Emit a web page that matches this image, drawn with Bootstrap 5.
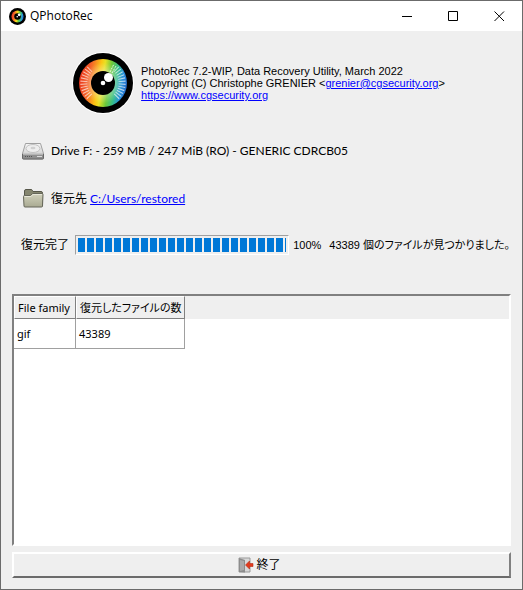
<!DOCTYPE html>
<html lang="ja">
<head>
<meta charset="utf-8">
<meta name="viewport" content="width=device-width, initial-scale=1">
<title>QPhotoRec</title>
<link href="https://cdn.jsdelivr.net/npm/bootstrap@5.3.0/dist/css/bootstrap.min.css" rel="stylesheet">
<style>
  body { font: 12px/12px Lato, "Noto Sans CJK JP", sans-serif; color: #000; background: #efefef; }
  .app-window { border: 1px solid #6b6b6b; min-height: 100vh; }
  .title-bar { height: 30px; }
  .title-text { font: 12px/16px "Open Sans", sans-serif; }
  .win-btn { width: 46px; height: 29px; border: 0; background: none; padding: 0; }
  .win-btn:hover { background: #e5e5e5; }
  a { color: #00f; }
  .about-row { height: 60px; margin-top: 22px; gap: 7px; padding-right: 6px; }
  .about-text { font: 11px/12px "Liberation Sans", sans-serif; }
  .drive-row, .dest-row { height: 24px; gap: 6px; padding-left: 20px; }
  .drive-row { margin-top: 26px; }
  .dest-row { margin-top: 24px; }
  .status-row { height: 20px; margin: 24px 12px 0 20px; gap: 4px; }
  .status-label { margin-right: 2px; }
  .status-value { font: 11px/12px "Liberation Sans", "Noto Sans CJK JP", sans-serif; font-feature-settings: "palt"; }
  .status-count { margin-left: 4px; }
  .scan-bar { height: 20px; border: 1px solid; border-color: #a0a0a0 #fff #fff #a0a0a0; border-radius: 0; background: #efefef; padding: 2px; }
  .scan-bar .progress-bar { background: repeating-linear-gradient(90deg, #0078d7 0 7px, #efefef 7px 9px); }
  .results { margin: 39px 11px 0; border: 2px solid; border-color: #808080 #fff #fff #808080; background: #fff; }
  .results-head { background: #efefef; }
  .results table { font: 11px/16px "Noto Sans", "Noto Sans CJK JP", sans-serif; font-feature-settings: "palt"; border-collapse: separate; border-spacing: 0; width: 100%; }
  .results th { height: 23px; padding: 0 2px 0 3px; font-weight: 400; background: #efefef; border: 1px solid; border-color: #fff #808080 #808080 #fff; white-space: nowrap; }
  .results tbody td { height: 30px; padding: 0 3px; border: 1px solid #a0a0a0; border-width: 0 1px 1px 0; }
  .results .family { width: 62px; }
  .results .count { width: 108px; }
  .results tbody .rest { border: 0; }
  .quit-btn { margin: 6px 11px 11px; padding: 0 4px 0 0; height: 26px; gap: 2px; font-size: 12px; color: #000; background: #efefef; border: 2px solid; border-color: #fff #808080 #6b6b6b #fff; }
</style>
</head>
<body>
<div class="app-window d-flex flex-column">
  <header class="title-bar bg-white d-flex align-items-center">
    <svg class="ms-2 me-1" width="17" height="17" viewBox="0 0 62 62" aria-hidden="true">
      <circle cx="31" cy="31" r="31"/>
      <circle cx="31" cy="31" r="22" fill="url(#iris)"/>
      <circle cx="31" cy="31" r="12"/>
      <circle cx="37" cy="25" r="5" fill="#fff"/><circle cx="30" cy="32" r="3" fill="#fff"/>
    </svg>
    <span class="title-text flex-grow-1">QPhotoRec</span>
    <button class="win-btn" type="button" aria-label="Minimize"><svg width="11" height="11"><path d="M0 5.5h10" stroke="#000"/></svg></button>
    <button class="win-btn" type="button" aria-label="Maximize"><svg width="11" height="11"><path d="M.5 .5h9v9h-9z" fill="none" stroke="#000"/></svg></button>
    <button class="win-btn" type="button" aria-label="Close"><svg width="11" height="11"><path d="M.5 .5l9.500 9.500M10 .5L.5 10" stroke="#000"/></svg></button>
  </header>

  <main class="d-flex flex-column flex-grow-1">
    <section class="about-row d-flex justify-content-center align-items-center">
      <svg width="62" height="62" viewBox="0 0 62 62" class="flex-shrink-0" aria-hidden="true">
        <defs>
          <linearGradient id="iris" x1="0" x2="1" y1=".42" y2=".58">
            <stop offset="0" stop-color="#e8341c"/><stop offset=".2" stop-color="#f4632a"/>
            <stop offset=".4" stop-color="#fbc512"/><stop offset=".48" stop-color="#e8e024"/>
            <stop offset=".62" stop-color="#6cc839"/><stop offset=".76" stop-color="#35bd8a"/>
            <stop offset=".88" stop-color="#2a93dc"/><stop offset="1" stop-color="#2368c8"/>
          </linearGradient>
          <radialGradient id="glow"><stop offset=".5" stop-color="#fff" stop-opacity=".3"/><stop offset=".85" stop-color="#fff" stop-opacity="0"/></radialGradient>
        </defs>
        <circle cx="31" cy="31" r="31" fill="#fff"/>
        <circle cx="31" cy="31" r="30"/>
        <circle cx="31" cy="31" r="24" fill="url(#iris)"/>
        <circle cx="31" cy="31" r="24" fill="url(#glow)"/>
        <g fill="none" stroke="#fff" stroke-opacity=".65" stroke-width="7" stroke-dasharray="1 1.700">
          <path d="M18 17A19 19 0 0 0 18 45"/>
          <path d="M44 17A19 19 0 0 1 44 45"/>
        </g>
        <path d="M38 20l4-8M40 21l4-7" stroke="#fff" stroke-opacity=".8" stroke-dasharray="2 1"/>
        <circle cx="31" cy="31" r="12"/>
        <circle cx="36.500" cy="25.500" r="4.500" fill="#fff"/>
        <circle cx="31" cy="31" r="2.300" fill="#fff"/>
      </svg>
      <div class="about-text text-nowrap">
        <div>PhotoRec 7.2-WIP, Data Recovery Utility, March 2022</div>
        <div>Copyright (C) Christophe GRENIER &lt;<a href="mailto:grenier@cgsecurity.org">grenier@cgsecurity.org</a>&gt;</div>
        <div><a href="https://www.cgsecurity.org">https://www.cgsecurity.org</a></div>
      </div>
    </section>

    <section class="drive-row d-flex align-items-center">
      <svg width="24" height="24" viewBox="0 0 24 24" aria-hidden="true">
        <defs><linearGradient id="metal" x2="0" y2="1"><stop stop-color="#f6f6f6"/><stop offset="1" stop-color="#c6c6c6"/></linearGradient></defs>
        <path d="M4.500 4.500h15l3 10v4.500q0 1-1 1h-19q-1 0-1-1v-4.500z" fill="url(#metal)" stroke="#a0a0a0"/>
        <path d="M1.500 15h21v4q0 1-1 1h-19q-1 0-1-1z" fill="#8f8f8f" stroke="#686868"/>
        <path d="M2 15h20" stroke="#eee"/>
        <ellipse cx="12" cy="9.500" rx="7" ry="4" fill="#eee" stroke="#c2c2c2"/>
        <ellipse cx="12" cy="9" rx="2.500" ry="1.300" fill="#d0d0d0"/>
        <path d="M4 17.500h7" stroke="#555" stroke-dasharray="1 1"/><path d="M16 17.500h5" stroke="#ddd"/>
      </svg>
      <span>Drive F: - 259 MB / 247 MiB (RO) - GENERIC CDRCB05</span>
    </section>

    <section class="dest-row d-flex align-items-center">
      <svg width="24" height="24" viewBox="0 0 24 24" aria-hidden="true">
        <defs><linearGradient id="fold" x2="0" y2="1"><stop stop-color="#d2d2bd"/><stop offset="1" stop-color="#a9aa92"/></linearGradient></defs>
        <path d="M3.500 19V4q0-1.500 1.500-1.500h5q1 0 1.500 1l.5 1h8q1.500 0 1.500 1.500v13z" fill="#85866f" stroke="#56574a"/>
        <path d="M2.500 9.500q0-1 1-1h6l2-2h9.500q1 0 1 1l-.5 11.500q0 1-1 1H4q-1 0-1-1z" fill="url(#fold)" stroke="#66675a"/>
        <path d="M3.500 9.500H10l2-2h9" fill="none" stroke="#e6e6d8"/>
      </svg>
      <span>復元先 <a href="#restored">C:/Users/restored</a></span>
    </section>

    <section class="status-row d-flex align-items-center text-nowrap">
      <span id="scan-label" class="status-label">復元完了</span>
      <div class="progress scan-bar flex-grow-1" role="progressbar" aria-labelledby="scan-label" aria-valuenow="100" aria-valuemin="0" aria-valuemax="100">
        <div class="progress-bar w-100"></div>
      </div>
      <span class="status-value">100%</span>
      <span class="status-value status-count">43389 個のファイルが見つかりました。</span>
    </section>

    <section class="results flex-grow-1">
      <table>
        <thead><tr><th class="family" scope="col">File family</th><th class="count" scope="col">復元したファイルの数</th><td class="results-head"></td></tr></thead>
        <tbody><tr><td>gif</td><td>43389</td><td class="rest"></td></tr></tbody>
      </table>
    </section>

    <button class="quit-btn btn rounded-0 d-flex justify-content-center align-items-center" type="button">
      <svg width="16" height="16" viewBox="0 0 16 16" aria-hidden="true">
        <path d="M1 1h11v14H1z" fill="#d8d8d8" stroke="#999"/>
        <path d="M1 1l6 2v12.500L1 15z" fill="#8c8c8c"/><path d="M2 3l4 1v9l-4 1z" fill="#aaa"/>
        <path d="M7.500 8l4-4v2.500H15v3h-3.500V12z" fill="#e23a1c" stroke="#b52a12" stroke-width=".6"/>
      </svg>
      <span>終了</span>
    </button>
  </main>
</div>
<script src="https://cdn.jsdelivr.net/npm/bootstrap@5.3.0/dist/js/bootstrap.bundle.min.js"></script>
</body>
</html>
